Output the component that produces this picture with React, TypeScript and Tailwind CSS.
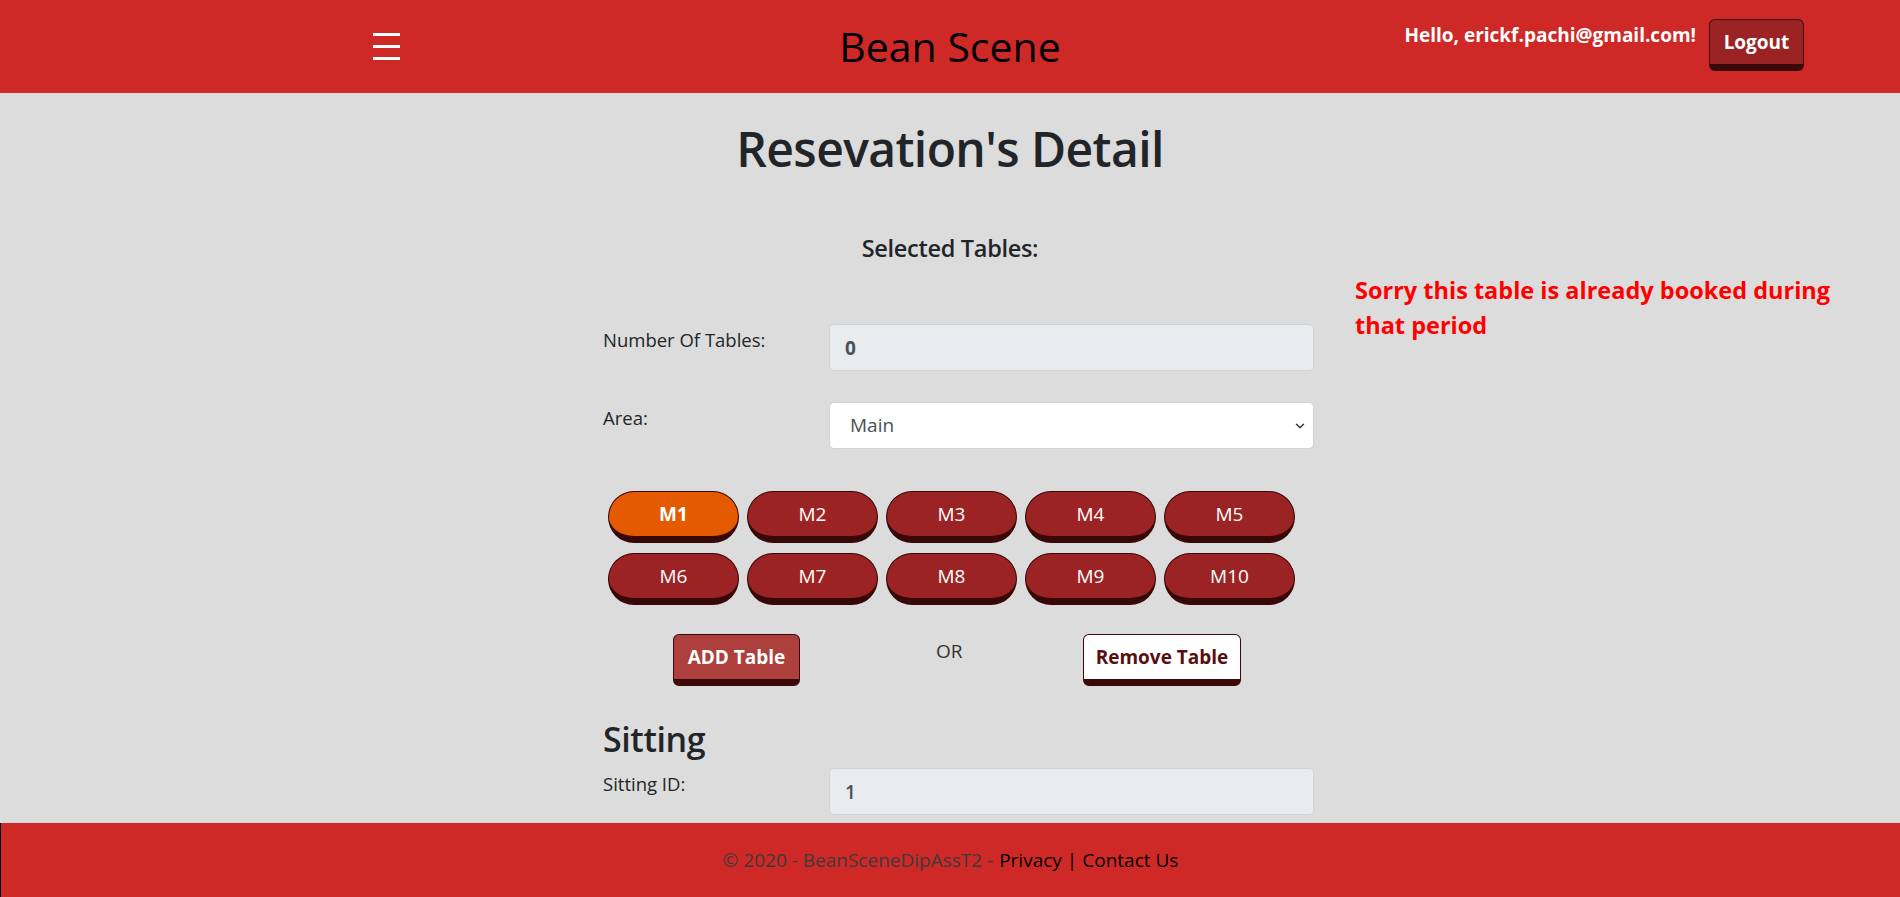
import { ChevronDown } from "lucide-react";

const tables = ["M1", "M2", "M3", "M4", "M5", "M6", "M7", "M8", "M9", "M10"];

function Header() {
  return (
    <header className="grid h-[93px] shrink-0 grid-cols-[1fr_auto_1fr] items-center bg-[#cf2927]">
      {/* hamburger */}
      <div className="pl-[373px]">
        <button className="flex w-[27px] flex-col gap-[9px] py-[1px]">
          <span className="h-[3px] w-full bg-white" />
          <span className="h-[3px] w-full bg-white" />
          <span className="h-[3px] w-full bg-white" />
        </button>
      </div>

      <div className="text-[41px] leading-none text-black">Bean Scene</div>

      <div className="flex items-start justify-end gap-[13px] self-start pr-[96px] pt-[19px]">
        <span className="pt-[1px] text-[19px] font-bold leading-[30px] text-white">
          Hello, erickf.pachi@gmail.com!
        </span>
        <button className="h-[52px] w-[95px] rounded-[6px] border border-b-[7px] border-[#3a0a0a] bg-[#9c2323] text-[19px] font-bold text-white">
          Logout
        </button>
      </div>
    </header>
  );
}

function TableButton({ name, active }: { name: string; active?: boolean }) {
  return (
    <button
      className={
        active
          ? "h-[52px] w-[131px] rounded-full border border-b-[7px] border-[#380808] bg-[#e35a00] text-[19px] font-bold text-white"
          : "h-[52px] w-[131px] rounded-full border border-b-[7px] border-[#380808] bg-[#9c2323] text-[19px] text-white"
      }
    >
      {name}
    </button>
  );
}

function Field({ label, children }: { label: string; children: React.ReactNode }) {
  return (
    <div className="grid grid-cols-[226px_1fr] items-start">
      <label className="pt-[1px] text-[18.5px] leading-[30px] text-[#212529]">{label}</label>
      {children}
    </div>
  );
}

export default function App() {
  return (
    <div className="flex h-[897px] flex-col overflow-hidden bg-[#dcdcdc] font-['Open_Sans',sans-serif]">
      <Header />

      <main className="flex-1 overflow-hidden">
        <h1 className="mt-[26px] text-center text-[48px] font-semibold leading-[60px] tracking-[-0.6px] text-[#212529]">
          Resevation's Detail
        </h1>

        <h5 className="mt-[54px] text-center text-[23.5px] font-semibold leading-[30px] tracking-[-0.3px] text-[#212529]">
          Selected Tables:
        </h5>

        <div className="grid grid-cols-[603px_711px_1fr]">
          <div />

          {/* form column */}
          <div className="flex flex-col pt-[61px]">
            <Field label="Number Of Tables:">
              <input
                readOnly
                value="0"
                className="h-[47px] w-full rounded-[5px] border border-[#ced4da] bg-[#e9ecef] px-[15px] text-[19px] font-bold text-[#495057] outline-none"
              />
            </Field>

            <div className="mt-[31px]">
              <Field label="Area:">
                <div className="flex h-[47px] w-full items-center justify-between rounded-[5px] border border-[#ced4da] bg-white pl-[20px] pr-[6px] text-[19px] text-[#495057]">
                  <span>Main</span>
                  <ChevronDown size={14} strokeWidth={2.5} className="text-[#343a40]" />
                </div>
              </Field>
            </div>

            <div className="mt-[42px] grid grid-cols-[repeat(5,131px)] gap-x-[8px] gap-y-[10px] pl-[5px]">
              {tables.map((t, i) => (
                <TableButton key={t} name={t} active={i === 0} />
              ))}
            </div>

            <div className="mt-[29px] flex items-start">
              <div className="w-[333px] pl-[70px]">
                <button className="h-[52px] w-[127px] rounded-[6px] border border-b-[7px] border-[#3a0a0a] bg-[#ad3f3c] text-[19px] font-bold text-white">
                  ADD Table
                </button>
              </div>
              <div className="w-[147px] pt-[2px] text-[19px] leading-[30px] text-[#333333]">OR</div>
              <button className="h-[52px] w-[158px] rounded-[6px] border border-b-[7px] border-[#3a0a0a] bg-white text-[19px] font-bold text-[#5a0f0f]">
                Remove Table
              </button>
            </div>

            <h3 className="mt-[32px] text-[34px] font-semibold leading-[42px] tracking-[-0.4px] text-[#212529]">Sitting</h3>

            <div className="mt-[8px]">
              <Field label="Sitting ID:">
                <input
                  readOnly
                  value="1"
                  className="h-[47px] w-full rounded-[5px] border border-[#ced4da] bg-[#e9ecef] px-[15px] text-[19px] font-semibold text-[#495057] outline-none"
                />
              </Field>
            </div>
          </div>

          {/* error column */}
          <div className="pl-[41px] pt-[10px]">
            <p className="w-[495px] text-[23.5px] font-bold leading-[35px] text-[#ff0000]">
              Sorry this table is already booked during that period
            </p>
          </div>
        </div>
      </main>

      <footer className="flex h-[74px] shrink-0 items-center justify-center border-l border-black bg-[#cf2927] text-[19px]">
        <span className="text-[#3d3a3a]">© 2020 - BeanSceneDipAssT2 - </span>
        <a className="ml-[6px] text-black">Privacy</a>
        <span className="mx-[5px] text-black">|</span>
        <a className="text-black">Contact Us</a>
      </footer>
    </div>
  );
}
